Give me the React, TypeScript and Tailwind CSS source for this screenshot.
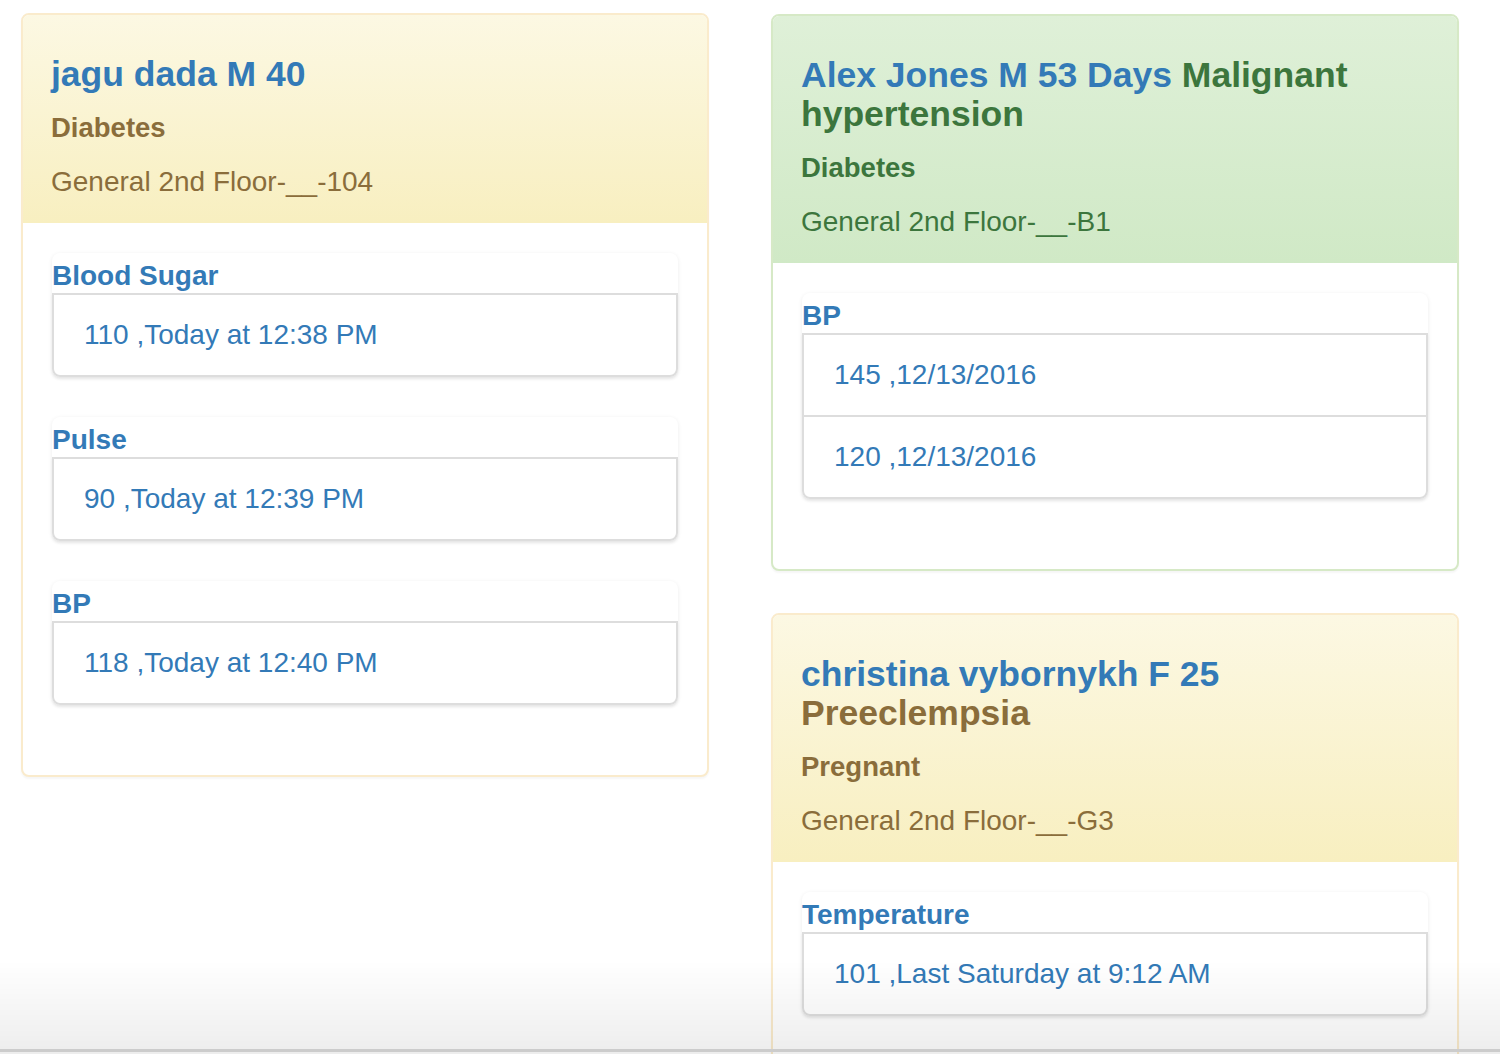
import React from "react";

type Reading = { value: string };
type Vital = { label: string; readings: Reading[] };
type Patient = {
  name: string;
  diagnosis?: string;
  condition: string;
  ward: string;
  tone: "warning" | "success";
  vitals: Vital[];
};

const leftPatients: Patient[] = [
  {
    name: "jagu dada M 40",
    condition: "Diabetes",
    ward: "General 2nd Floor-__-104",
    tone: "warning",
    vitals: [
      { label: "Blood Sugar", readings: [{ value: "110 ,Today at 12:38 PM" }] },
      { label: "Pulse", readings: [{ value: "90 ,Today at 12:39 PM" }] },
      { label: "BP", readings: [{ value: "118 ,Today at 12:40 PM" }] },
    ],
  },
];

const rightPatients: Patient[] = [
  {
    name: "Alex Jones M 53 Days",
    diagnosis: "Malignant hypertension",
    condition: "Diabetes",
    ward: "General 2nd Floor-__-B1",
    tone: "success",
    vitals: [
      {
        label: "BP",
        readings: [{ value: "145 ,12/13/2016" }, { value: "120 ,12/13/2016" }],
      },
    ],
  },
  {
    name: "christina vybornykh F 25",
    diagnosis: "Preeclempsia",
    condition: "Pregnant",
    ward: "General 2nd Floor-__-G3",
    tone: "warning",
    vitals: [
      { label: "Temperature", readings: [{ value: "101 ,Last Saturday at 9:12 AM" }] },
    ],
  },
];

const tones = {
  warning: {
    border: "border-[#faebcc]",
    heading: "bg-gradient-to-b from-[#fcf8e3] to-[#f8efc0]",
    text: "text-[#8a6d3b]",
  },
  success: {
    border: "border-[#d6e9c6]",
    heading: "bg-gradient-to-b from-[#dff0d8] to-[#d0e9c6]",
    text: "text-[#3c763d]",
  },
};

const VitalCard = ({ vital }: { vital: Vital }) => (
  <div className="mb-[40px] rounded-[8px] bg-white shadow-[0_1px_4px_rgba(0,0,0,0.08)]">
    <div className="h-[40px] pt-[7px]">
      <span className="block text-[28px] leading-[31px] font-bold text-[#337ab7]">
        {vital.label}
      </span>
    </div>
    <div className="rounded-b-[8px] border-2 border-[#dddddd] shadow-[0_2px_3px_rgba(0,0,0,0.06)]">
      {vital.readings.map((r, i) => (
        <div
          key={i}
          className={
            "px-[30px] py-[20px] text-[28px] leading-[40px] text-[#337ab7]" +
            (i > 0 ? " border-t-2 border-[#dddddd]" : "")
          }
        >
          {r.value}
        </div>
      ))}
    </div>
  </div>
);

const PatientPanel = ({ patient }: { patient: Patient }) => {
  const t = tones[patient.tone];
  return (
    <div
      className={`mb-[42px] overflow-hidden rounded-[8px] border-2 bg-white shadow-[0_2px_2px_rgba(0,0,0,0.04)] ${t.border}`}
    >
      <div className={`px-[28px] pt-[40px] pb-[26px] ${t.heading} ${t.text}`}>
        <h4 className="text-[35.5px] leading-[39px] font-bold">
          <span className="text-[#337ab7]">{patient.name}</span>
          {patient.diagnosis ? " " + patient.diagnosis : ""}
        </h4>
        <h5 className="mt-[18px] text-[27.5px] leading-[31px] font-bold">
          {patient.condition}
        </h5>
        <h5 className="mt-[23px] text-[28px] leading-[31px]">{patient.ward}</h5>
      </div>
      <div className="px-[29px] pt-[30px] pb-[30px]">
        {patient.vitals.map((v) => (
          <VitalCard key={v.label} vital={v} />
        ))}
      </div>
    </div>
  );
};

export default function App() {
  return (
    <div className="relative min-h-[1054px] bg-white font-['Liberation_Sans',Arial,sans-serif]">
      <div className="flex gap-[62px] pt-[13px] pl-[21px]">
        <div className="w-[688px]">
          {leftPatients.map((p) => (
            <PatientPanel key={p.name} patient={p} />
          ))}
        </div>
        <div className="mt-[1px] w-[688px]">
          {rightPatients.map((p) => (
            <PatientPanel key={p.name} patient={p} />
          ))}
        </div>
      </div>
      <div className="pointer-events-none fixed inset-x-0 bottom-0 h-[94px] bg-gradient-to-b from-[rgba(0,0,0,0)] to-[rgba(0,0,0,0.07)]">
        <div className="absolute inset-x-0 bottom-[2px] h-[3px] bg-[#cccccc]" />
      </div>
    </div>
  );
}
